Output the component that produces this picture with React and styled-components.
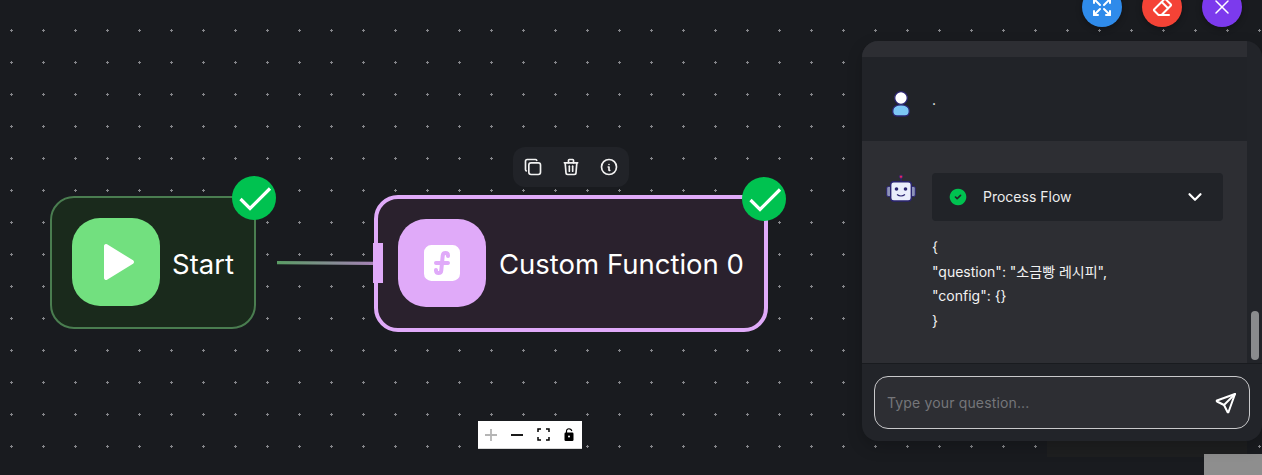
import React from "react";
import styled, { createGlobalStyle } from "styled-components";
import {
    TbArrowsMaximize,
    TbEraser,
    TbX,
    TbCopy,
    TbTrash,
    TbInfoCircle,
    TbChevronDown,
    TbSend,
    TbPlayerPlayFilled,
    TbFunctionFilled,
    TbCircleCheckFilled,
} from "react-icons/tb";

const GlobalStyle = createGlobalStyle`
    html, body {
        margin: 0;
        padding: 0;
        background: #191b1f;
        overflow: hidden;
    }
    * {
        box-sizing: border-box;
    }
`;

const Canvas = styled.div`
    position: relative;
    width: 1262px;
    height: 475px;
    overflow: hidden;
    background-color: #191b1f;
    background-image: radial-gradient(circle at 1.5px 1.5px, #85868a 1px, transparent 1.4px);
    background-size: 32px 32px;
    background-position: 10px 29px;
    font-family: Inter, "Noto Sans CJK KR", sans-serif;
`;

const Node = styled.div`
    position: absolute;
    left: ${(p) => p.$left}px;
    top: ${(p) => p.$top}px;
    width: ${(p) => p.$width}px;
    height: ${(p) => p.$height}px;
    display: flex;
    align-items: center;
    gap: ${(p) => p.$gap}px;
    padding-left: ${(p) => p.$pad}px;
    border: ${(p) => p.$border}px solid ${(p) => p.$borderColor};
    border-radius: 24px;
    background: ${(p) => p.$bg};
`;

const NodeIcon = styled.div`
    width: 88px;
    height: 88px;
    flex: none;
    display: flex;
    align-items: center;
    justify-content: center;
    margin-bottom: 1px;
    border-radius: 28px;
    background: ${(p) => p.$color};
    color: #fff;
`;

const NodeLabel = styled.span`
    padding-top: ${(p) => p.$drop}px;
    color: #fff;
    font-size: 27.5px;
    line-height: 32px;
    white-space: nowrap;
`;

const Badge = styled.div`
    position: absolute;
    left: ${(p) => p.$left}px;
    top: ${(p) => p.$top}px;
    width: 44px;
    height: 44px;
    border-radius: 50%;
    background: #00c250;
`;

const Handle = styled.div`
    position: absolute;
    left: 373px;
    top: 243px;
    width: 10px;
    height: 40px;
    background: #e0aaf9;
`;

const Edge = styled.svg`
    position: absolute;
    left: 276px;
    top: 258px;
    width: 98px;
    height: 10px;
`;

const NodeToolbar = styled.div`
    position: absolute;
    left: 513px;
    top: 147px;
    width: 116px;
    height: 40px;
    display: flex;
    align-items: center;
    justify-content: space-between;
    padding: 0 10px 0 10px;
    border-radius: 12px;
    background: #212328;
    color: #f2f2f2;
`;

const Controls = styled.div`
    position: absolute;
    left: 478px;
    top: 421px;
    width: 104px;
    height: 28px;
    display: flex;
    background: #fff;
    border-bottom: 1px solid #d8d8d8;
`;

const ControlButton = styled.div`
    width: 26px;
    height: 27px;
    display: flex;
    align-items: center;
    justify-content: center;
    color: #000;
`;

const TopActions = styled.div`
    position: absolute;
    left: 1082px;
    top: -13px;
    display: flex;
    gap: 20px;
`;

const RoundButton = styled.div`
    width: 40px;
    height: 40px;
    display: flex;
    align-items: center;
    justify-content: center;
    border-radius: 50%;
    background: ${(p) => p.$color};
    color: #fff;
    box-shadow: 0 2px 6px rgba(0, 0, 0, 0.3);
`;

const ChatPanel = styled.div`
    position: absolute;
    left: 862px;
    top: 41px;
    width: 400px;
    height: 400px;
    display: flex;
    flex-direction: column;
    border-radius: 16px;
    overflow: hidden;
    background: #222429;
    box-shadow: 0 6px 16px rgba(0, 0, 0, 0.2);
`;

const MessageArea = styled.div`
    position: relative;
    height: 323px;
    flex: none;
    padding-right: 15px;
    border-bottom: 1px solid #191b1f;
`;

const TopStrip = styled.div`
    height: 16px;
    background: #2d2e33;
`;

const UserRow = styled.div`
    height: 84px;
    display: flex;
    align-items: center;
    padding-left: 24px;
    color: #f2f2f2;
    font-size: 14px;
    background: #212328;
`;

const UserIcon = styled.svg`
    margin-top: 10px;
    flex: none;
`;

const UserDot = styled.span`
    margin-left: 16px;
`;

const BotRow = styled.div`
    height: 222px;
    display: flex;
    padding: 32px 24px 0 24px;
    background: #2d2e33;
`;

const BotIcon = styled.svg`
    margin-top: 1px;
    flex: none;
`;

const BotBody = styled.div`
    flex: 1;
    margin-left: 16px;
`;

const ProcessBox = styled.div`
    height: 48px;
    display: flex;
    align-items: center;
    padding: 0 17px 0 16px;
    border-radius: 4px;
    background: #212328;
    color: #ececec;
    font-size: 14px;
`;

const ProcessTitle = styled.span`
    flex: 1;
    margin-left: 15px;
    padding-bottom: 2px;
`;

const JsonBlock = styled.div`
    margin-top: 14px;
    color: #f2f2f2;
    font-size: 14px;
    line-height: 24.5px;
`;

const Scrollbar = styled.div`
    position: absolute;
    right: 3px;
    top: 270px;
    width: 8px;
    height: 49px;
    border-radius: 4px;
    background: #8a8b8d;
`;

const InputBar = styled.div`
    flex: 1;
    padding: 12px;
`;

const InputBox = styled.div`
    height: 53px;
    display: flex;
    align-items: center;
    padding: 0 11px 0 12px;
    border: 1px solid #c9c9cb;
    border-radius: 14px;
    background: #2d2e33;
    color: #fff;
`;

const QuestionInput = styled.input`
    flex: 1;
    min-width: 0;
    border: 0;
    outline: 0;
    padding: 0;
    background: transparent;
    color: #fff;
    font: 14px Inter, sans-serif;
    letter-spacing: 0.15px;
    &::placeholder {
        color: #75767a;
        opacity: 1;
    }
`;

const BottomShade = styled.div`
    position: absolute;
    left: 1047px;
    top: 441px;
    width: 200px;
    height: 16px;
    background: #1e1f20;
`;

const GreyCorner = styled.div`
    position: absolute;
    left: 1204px;
    top: 454px;
    width: 58px;
    height: 21px;
    background: #8e8e8e;
`;

const Check = () => (
    <svg width="44" height="44" viewBox="0 0 44 44" fill="none">
        <path d="M8.5 23 L18 32.5 L38 12.5" stroke="#fff" strokeWidth="3.2" />
    </svg>
);

const UserAvatar = () => (
    <UserIcon width="30" height="26" viewBox="0 0 30 26">
        <circle cx="15" cy="7" r="6.300" fill="#fff" stroke="#2a2470" strokeWidth="1.300" />
        <path
            d="M6.700 20 C6.700 16 10 13.800 15 13.800 C20 13.800 23.300 16 23.300 20 C23.300 23.500 22 25 19 25 L11 25 C8 25 6.700 23.500 6.700 20 Z"
            fill="#7cc6f5"
            stroke="#2a2470"
            strokeWidth="1.300"
        />
    </UserIcon>
);

const BotAvatar = () => (
    <BotIcon width="30" height="28" viewBox="0 0 30 28">
        <path d="M15 3 V8" stroke="#2a2470" strokeWidth="1.400" />
        <circle cx="15" cy="2.700" r="1.700" fill="#e0245e" stroke="#2a2470" strokeWidth="0.800" />
        <rect x="0.700" y="12.500" width="4.500" height="10" rx="1.500" fill="#8d93b8" stroke="#2a2470" strokeWidth="1" />
        <rect x="24.800" y="12.500" width="4.500" height="10" rx="1.500" fill="#8d93b8" stroke="#2a2470" strokeWidth="1" />
        <rect x="4.700" y="7.800" width="20.600" height="19.200" rx="3" fill="#e9edfb" stroke="#2a2470" strokeWidth="1.400" />
        <circle cx="10.500" cy="15" r="1.800" fill="#2a2470" />
        <circle cx="19.500" cy="15" r="1.800" fill="#2a2470" />
        <path d="M11 20.500 Q15 23.500 19 20.500" fill="none" stroke="#2a2470" strokeWidth="1.200" />
    </BotIcon>
);

const FitIcon = () => (
    <svg width="13" height="13" viewBox="0 0 13 13" fill="none" stroke="#000" strokeWidth="1.500">
        <path d="M1 4 V1 H4 M9 1 H12 V4 M12 9 V12 H9 M4 12 H1 V9" />
    </svg>
);

const LockIcon = () => (
    <svg width="10" height="13" viewBox="0 0 10 13">
        <path d="M2.500 5 V3 C2.500 1.300 4 0.500 5.500 0.800 C6.700 1 7.500 1.800 7.800 3" fill="none" stroke="#000" strokeWidth="1.200" />
        <rect x="0.500" y="4.500" width="9" height="8.500" rx="1.200" fill="#000" />
        <circle cx="5" cy="8.500" r="1" fill="#fff" />
    </svg>
);

const App = () => {
    return (
        <Canvas>
            <GlobalStyle />
            <BottomShade />
            <GreyCorner />

            <Edge viewBox="0 0 98 10">
                <defs>
                    <linearGradient id="edgeGrad" x1="0" x2="1" y1="0" y2="0">
                        <stop offset="0" stopColor="#5a9c64" />
                        <stop offset="1" stopColor="#a582b5" />
                    </linearGradient>
                </defs>
                <path d="M1 3 L97 3.700 L97 7 L1 6.300 Z" fill="url(#edgeGrad)" />
            </Edge>

            <Node $left={50} $top={196} $width={206} $height={133} $border={2} $borderColor="#4a7d50" $bg="#1a2a1c" $pad={20} $gap={12}>
                <NodeIcon $color="#72e07f">
                    <TbPlayerPlayFilled size={48} />
                </NodeIcon>
                <NodeLabel $drop={3}>Start</NodeLabel>
            </Node>
            <Badge $left={232} $top={176}>
                <Check />
            </Badge>

            <NodeToolbar>
                <TbCopy size={20} />
                <TbTrash size={20} />
                <TbInfoCircle size={20} />
            </NodeToolbar>

            <Node $left={374} $top={195} $width={394} $height={137} $border={4} $borderColor="#e0aaf9" $bg="#2a212d" $pad={20} $gap={13}>
                <NodeIcon $color="#e0aaf9">
                    <TbFunctionFilled size={48} />
                </NodeIcon>
                <NodeLabel $drop={1}>Custom Function 0</NodeLabel>
            </Node>
            <Handle />
            <Badge $left={742} $top={177}>
                <Check />
            </Badge>

            <Controls>
                <ControlButton>
                    <svg width="14" height="14" viewBox="0 0 14 14">
                        <path d="M7 1 V13 M1 7 H13" stroke="#b5b5b5" strokeWidth="1.800" />
                    </svg>
                </ControlButton>
                <ControlButton>
                    <svg width="14" height="14" viewBox="0 0 14 14">
                        <path d="M1 7 H13" stroke="#000" strokeWidth="1.800" />
                    </svg>
                </ControlButton>
                <ControlButton>
                    <FitIcon />
                </ControlButton>
                <ControlButton>
                    <LockIcon />
                </ControlButton>
            </Controls>

            <TopActions>
                <RoundButton $color="#2f8bea">
                    <TbArrowsMaximize size={24} />
                </RoundButton>
                <RoundButton $color="#f44336">
                    <TbEraser size={24} />
                </RoundButton>
                <RoundButton $color="#7c3aed">
                    <TbX size={24} strokeWidth={1.5} />
                </RoundButton>
            </TopActions>

            <ChatPanel>
                <MessageArea>
                    <TopStrip />
                    <UserRow>
                        <UserAvatar />
                        <UserDot>.</UserDot>
                    </UserRow>
                    <BotRow>
                        <BotAvatar />
                        <BotBody>
                            <ProcessBox>
                                <TbCircleCheckFilled size={20} color="#00c250" />
                                <ProcessTitle>Process Flow</ProcessTitle>
                                <TbChevronDown size={22} color="#fff" strokeWidth={2.4} />
                            </ProcessBox>
                            <JsonBlock>
                                <div>{"{"}</div>
                                <div>"question": "소금빵 레시피",</div>
                                <div>"config": {"{}"}</div>
                                <div>{"}"}</div>
                            </JsonBlock>
                        </BotBody>
                    </BotRow>
                    <Scrollbar />
                </MessageArea>
                <InputBar>
                    <InputBox>
                        <QuestionInput placeholder="Type your question..." />
                        <TbSend size={24} />
                    </InputBox>
                </InputBar>
            </ChatPanel>
        </Canvas>
    );
};

export default App;
